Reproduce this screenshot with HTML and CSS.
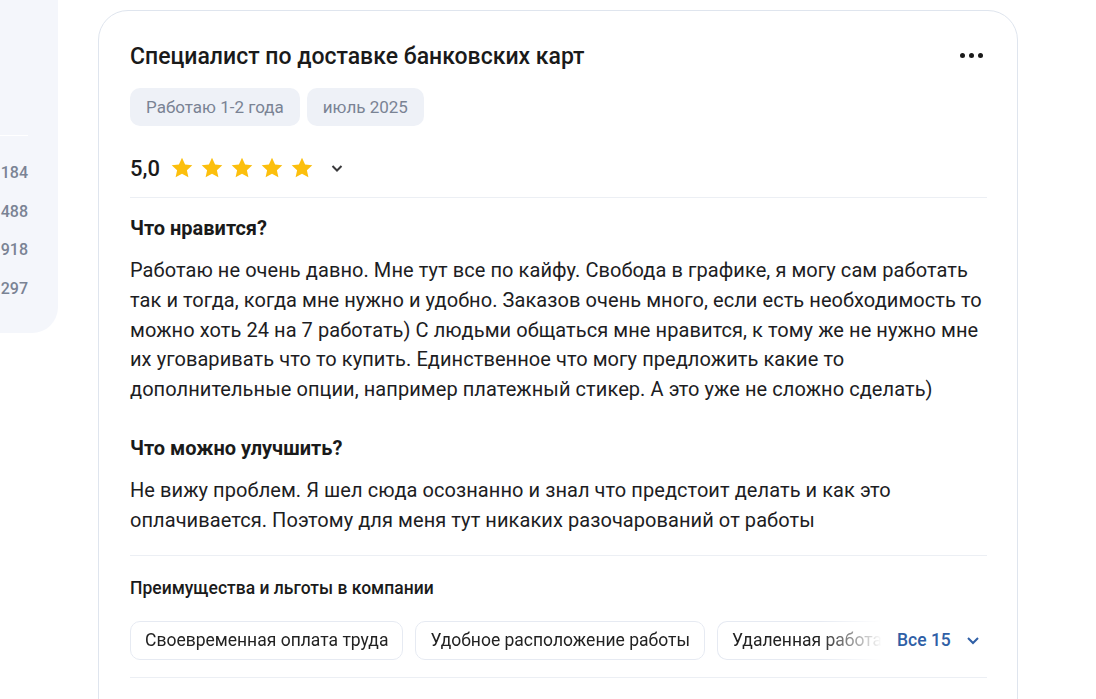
FILE: index.html
```html
<!DOCTYPE html>
<html>
<head>
  <title>Отзыв</title>
  <link rel="stylesheet" href="styles.css">
</head>

<body>

<div class="pageWrap">

  <div class="sideStats">
    <div class="sideLine"></div>
    <p class="sideNum">184</p>
    <p class="sideNum">488</p>
    <p class="sideNum">918</p>
    <p class="sideNum">297</p>
  </div>

  <div class="reviewCard">
    <div class="reviewHead">
      <h2 class="reviewTitle">Специалист по доставке банковских карт</h2>
      <div class="moreDots"><span></span><span></span><span></span></div>
    </div>

    <div class="tagRow">
      <span class="tag">Работаю 1-2 года</span>
      <span class="tag">июль 2025</span>
    </div>

    <div class="ratingRow">
      <span class="ratingNum">5,0</span>
      <div class="stars">
        <svg viewBox="0 0 24 24"><path d="M12 1.8l3.1 6.6 7.2.8-5.4 5 1.5 7.1L12 17.7l-6.4 3.6 1.5-7.1-5.4-5 7.2-.8z"/></svg>
        <svg viewBox="0 0 24 24"><path d="M12 1.8l3.1 6.6 7.2.8-5.4 5 1.5 7.1L12 17.7l-6.4 3.6 1.5-7.1-5.4-5 7.2-.8z"/></svg>
        <svg viewBox="0 0 24 24"><path d="M12 1.8l3.1 6.6 7.2.8-5.4 5 1.5 7.1L12 17.7l-6.4 3.6 1.5-7.1-5.4-5 7.2-.8z"/></svg>
        <svg viewBox="0 0 24 24"><path d="M12 1.8l3.1 6.6 7.2.8-5.4 5 1.5 7.1L12 17.7l-6.4 3.6 1.5-7.1-5.4-5 7.2-.8z"/></svg>
        <svg viewBox="0 0 24 24"><path d="M12 1.8l3.1 6.6 7.2.8-5.4 5 1.5 7.1L12 17.7l-6.4 3.6 1.5-7.1-5.4-5 7.2-.8z"/></svg>
      </div>
      <svg class="chevron" viewBox="0 0 16 16"><path d="M3.5 6l4.5 4.5 4.5-4.5"/></svg>
    </div>

    <div class="reviewBody">
      <h3 class="qTitle">Что нравится?</h3>
      <p class="qText">Работаю не очень давно. Мне тут все по кайфу. Свобода в графике, я могу сам работать так и тогда, когда мне нужно и удобно. Заказов очень много, если есть необходимость то можно хоть 24 на 7 работать) С людьми общаться мне нравится, к тому же не нужно мне их уговаривать что то купить. Единственное что могу предложить какие то дополнительные опции, например платежный стикер. А это уже не сложно сделать)</p>

      <h3 class="qTitle second">Что можно улучшить?</h3>
      <p class="qText">Не вижу проблем. Я шел сюда осознанно и знал что предстоит делать и как это оплачивается. Поэтому для меня тут никаких разочарований от работы</p>
    </div>

    <div class="perksBlock">
      <h4 class="perksTitle">Преимущества и льготы в компании</h4>
      <div class="perksRow">
        <div class="perksList">
          <span class="perk">Своевременная оплата труда</span>
          <span class="perk">Удобное расположение работы</span>
          <span class="perk cut">Удаленная работа</span>
        </div>
        <div class="perksAll">
          <span>Все 15</span>
          <svg class="chevron blue" viewBox="0 0 16 16"><path d="M3 6l5 5 5-5"/></svg>
        </div>
      </div>
    </div>
  </div>

</div>

</body>
</html>
```

FILE: styles.css
```css
body {
  margin: 0;
  background: #fff;
  font-family: Roboto, "Noto Sans", Arial, sans-serif;
  color: #1d1d1f;
  overflow: hidden;
}

.pageWrap {
  display: flex;
  align-items: flex-start;
  gap: 40px;
}

.sideStats {
  width: 58px;
  height: 333px;
  flex-shrink: 0;
  background-color: #f4f6fb;
  border-bottom-right-radius: 26px;
  padding-top: 135px;
  box-sizing: border-box;
}

.sideLine {
  width: 28px;
  height: 1px;
  background: #fff;
  margin-bottom: 26px;
}

.sideNum {
  margin: 0;
  width: 28px;
  text-align: right;
  font-size: 16px;
  font-weight: 500;
  line-height: 22px;
  height: 38.7px;
  color: #7a8394;
}

.reviewCard {
  width: 920px;
  height: 760px;
  flex-shrink: 0;
  box-sizing: border-box;
  margin-top: 10px;
  border: 1px solid #dfe5ee;
  border-radius: 30px;
  padding: 31px 30px 0 31px;
}

.reviewHead {
  display: flex;
  align-items: center;
  justify-content: space-between;
}

.reviewTitle {
  margin: 0;
  font-size: 23px;
  font-weight: 500;
  line-height: 30px;
  color: #1a1a1a;
}

.moreDots {
  display: flex;
  gap: 4px;
  margin-right: 4px;
  margin-bottom: 4px;
}

.moreDots span {
  width: 5px;
  height: 5px;
  border-radius: 50%;
  background: #1a1a1a;
}

.tagRow {
  display: flex;
  gap: 7px;
  margin-top: 16px;
}

.tag {
  height: 38px;
  line-height: 38px;
  padding: 0 16px;
  border-radius: 10px;
  background: #eef1f7;
  color: #7a8394;
  font-size: 17px;
}

.ratingRow {
  display: flex;
  align-items: center;
  height: 30px;
  margin-top: 27px;
  padding-bottom: 14px;
  border-bottom: 1px solid #eceff4;
}

.ratingNum {
  font-size: 22px;
  font-weight: 500;
  color: #1a1a1a;
  margin-right: 10px;
}

.stars {
  display: flex;
  gap: 6px;
}

.stars svg {
  width: 24px;
  height: 24px;
  fill: #fcbf0c;
}

.chevron {
  width: 16px;
  height: 16px;
  fill: none;
  stroke: #3a3a3c;
  stroke-width: 2;
  margin-left: 15px;
}

.chevron.blue {
  stroke: #2f5fa6;
  margin-left: 14px;
}

.reviewBody {
  padding-top: 15px;
  padding-bottom: 19px;
  border-bottom: 1px solid #eceff4;
}

.qTitle {
  margin: 0;
  font-size: 20px;
  font-weight: 700;
  line-height: 30px;
  color: #1a1a1a;
}

.qTitle.second {
  margin-top: 28px;
}

.qText {
  margin: 13px -8px 0 0;
  font-size: 20px;
  letter-spacing: 0.07px;
  line-height: 29.8px;
  color: #1d1d1f;
}

.perksBlock {
  padding-top: 20px;
  padding-bottom: 17px;
  border-bottom: 1px solid #eceff4;
}

.perksTitle {
  margin: 0;
  font-size: 17.5px;
  font-weight: 500;
  line-height: 24px;
  color: #1a1a1a;
}

.perksRow {
  display: flex;
  align-items: center;
  margin-top: 21px;
}

.perksList {
  display: flex;
  gap: 12px;
  width: 752px;
  overflow: hidden;
  -webkit-mask-image: linear-gradient(90deg, #000 690px, transparent 752px);
  mask-image: linear-gradient(90deg, #000 690px, transparent 752px);
}

.perk {
  flex-shrink: 0;
  height: 37px;
  line-height: 37px;
  padding: 0 14px;
  border: 1px solid #e6eaf2;
  border-radius: 10px;
  font-size: 17.5px;
  color: #222;
  white-space: nowrap;
}

.perk.cut {
  flex-shrink: 1;
  min-width: 0;
  overflow: hidden;
  padding-right: 0;
  border-right: none;
  border-radius: 10px 0 0 10px;
}

.perksAll {
  display: flex;
  align-items: center;
  margin-left: 15px;
  font-size: 17.5px;
  font-weight: 500;
  color: #2f5fa6;
  white-space: nowrap;
}
```
